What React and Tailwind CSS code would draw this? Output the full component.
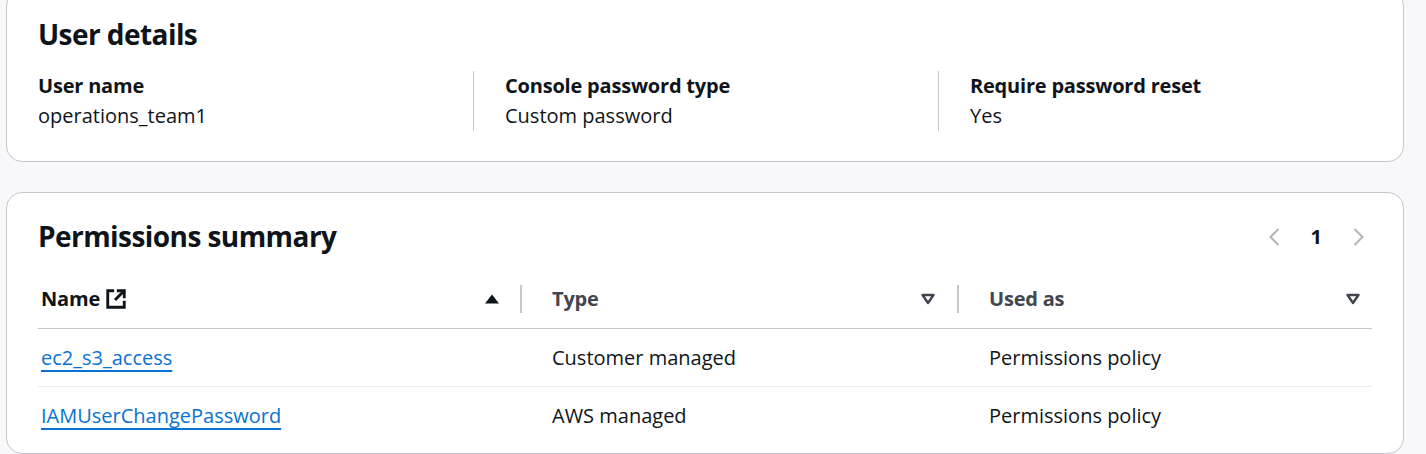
import React from 'react';

// icon helpers
const ExternalIcon = () => (
    <svg width="22" height="22" viewBox="0 0 20 20" fill="none" stroke="currentColor" strokeWidth="2.6" strokeLinecap="square">
        <path d="M7 2.5H2.5v15h15V13" />
        <path d="M12 2.5h5.5V8" />
        <path d="M17 3 10 10" />
    </svg>
);

const SortUp = () => (
    <svg width="16" height="10" viewBox="0 0 16 10">
        <path d="M1 9.5h14L8 0.5z" fill="#0f141a" />
    </svg>
);

const SortDown = () => (
    <svg width="16" height="12" viewBox="0 0 16 12">
        <path d="M2.5 2h11L8 10z" fill="none" stroke="#424650" strokeWidth="2.4" strokeLinejoin="round" />
    </svg>
);

const Chevron = ({ dir }) => (
    <svg width="14" height="18" viewBox="0 0 14 18" fill="none" stroke="#b4b4bb" strokeWidth="2">
        {dir === 'left' ? <path d="M11.5 1 3.5 9l8 8" /> : <path d="M2.5 1l8 8-8 8" />}
    </svg>
);

const details = [
    { label: 'User name', value: 'operations_team1' },
    { label: 'Console password type', value: 'Custom password' },
    { label: 'Require password reset', value: 'Yes' },
];

const policies = [
    { name: 'ec2_s3_access', type: 'Customer managed', usedAs: 'Permissions policy' },
    { name: 'IAMUserChangePassword', type: 'AWS managed', usedAs: 'Permissions policy' },
];

export default function App() {
    return (
        <div className="h-[454px] overflow-hidden bg-[#f8f8fa] font-['Open_Sans',sans-serif] text-[#0f141a]">
            {/* User details */}
            <div className="mt-[-10px] ml-[6px] w-[1398px] rounded-[16px] border border-[#c6c6cd] bg-white px-[31px] pt-[25px] pb-[30px]">
                <h2 className="h-[36px] text-[28px] font-bold leading-[36px] tracking-[-0.02em]">User details</h2>
                <div className="mt-[19px] grid grid-cols-[435px_465px_1fr]">
                    {details.map((d, i) => (
                        <div key={d.label} className={i > 0 ? 'border-l border-[#c6c6cd] pl-[31px]' : ''}>
                            <div className="text-[20px] font-bold leading-[30px] tracking-[-0.01em]">{d.label}</div>
                            <div className="text-[20px] leading-[30px]">{d.value}</div>
                        </div>
                    ))}
                </div>
            </div>

            {/* Permissions summary */}
            <div className="mt-[30px] ml-[6px] w-[1398px] rounded-[16px] border border-[#c6c6cd] bg-white px-[31px] pt-[25px] pb-[8px]">
                <div className="flex h-[36px] items-center justify-between">
                    <h2 className="text-[28px] font-bold leading-[36px] tracking-[-0.02em]">Permissions summary</h2>
                    <div className="mt-[1px] flex items-center gap-[30px] pr-[6px]">
                        <Chevron dir="left" />
                        <span className="text-[20px] font-bold leading-[20px]">1</span>
                        <Chevron dir="right" />
                    </div>
                </div>

                <div className="mt-[16px]">
                    <div className="flex h-[59px] items-center border-b border-[#c6c6cd] text-[20px] font-bold tracking-[-0.01em]">
                        <div className="flex w-[482px] items-center justify-between pl-[3px] pr-[20px]">
                            <span className="flex items-center gap-[5px]">
                                Name <ExternalIcon />
                            </span>
                            <SortUp />
                        </div>
                        <div className="h-[28px] w-[2px] bg-[#c6c6cd]" />
                        <div className="flex w-[435px] items-center justify-between pl-[30px] pr-[21px] text-[#424650]">
                            <span>Type</span>
                            <SortDown />
                        </div>
                        <div className="h-[28px] w-[2px] bg-[#c6c6cd]" />
                        <div className="flex flex-1 items-center justify-between pl-[30px] pr-[11px] text-[#424650]">
                            <span>Used as</span>
                            <SortDown />
                        </div>
                    </div>
                    {policies.map((p, i) => (
                        <div key={p.name} className={`flex h-[58px] items-center text-[20px] ${i < policies.length - 1 ? 'border-b border-[#e9ebed]' : ''}`}>
                            <div className="w-[484px] pl-[3px]">
                                <a href="#" className="text-[#0972d3] underline decoration-[2px] underline-offset-[5px]">{p.name}</a>
                            </div>
                            <div className="w-[437px] pl-[30px]">{p.type}</div>
                            <div className="flex-1 pl-[30px]">{p.usedAs}</div>
                        </div>
                    ))}
                </div>
            </div>
        </div>
    );
}
